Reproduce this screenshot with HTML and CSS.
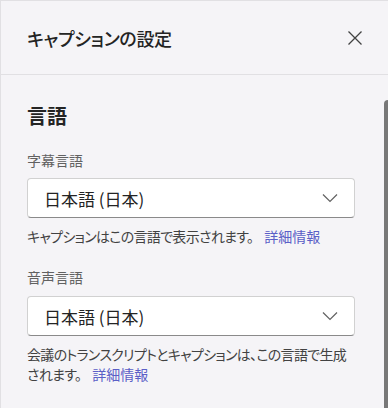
FILE: index.html
```html
<!DOCTYPE html>
<html lang="ja">
<head>
  <meta charset="UTF-8" />
  <meta name="viewport" content="width=device-width, initial-scale=1.0" />
  <title>キャプションの設定</title>
  <link rel="stylesheet" href="styles.css">
</head>
<body>

  <div class="panel">
    <!-- HEADER -->
    <header class="panel-header">
      <h1>キャプションの設定</h1>
      <button class="close-btn" aria-label="閉じる">
        <svg width="16" height="16" viewBox="0 0 16 16">
          <path d="M1.5 1.5 L14.5 14.5 M14.5 1.5 L1.5 14.5" stroke="#424242" stroke-width="1.3" fill="none" />
        </svg>
      </button>
    </header>

    <!-- CONTENT -->
    <main class="panel-body">
      <h2>言語</h2>

      <div class="field">
        <label>字幕言語</label>
        <div class="select">
          <span>日本語 (日本)</span>
          <svg width="16" height="10" viewBox="0 0 16 10">
            <path d="M1 1.5 L8 8.5 L15 1.5" stroke="#616161" stroke-width="1.2" fill="none" />
          </svg>
        </div>
        <p class="hint">キャプションはこの言語で表示されます。<a href="#">詳細情報</a></p>
      </div>

      <div class="field">
        <label>音声言語</label>
        <div class="select">
          <span>日本語 (日本)</span>
          <svg width="16" height="10" viewBox="0 0 16 10">
            <path d="M1 1.5 L8 8.5 L15 1.5" stroke="#616161" stroke-width="1.2" fill="none" />
          </svg>
        </div>
        <p class="hint">会議のトランスクリプトとキャプションは、この言語で生成されます。<a href="#">詳細情報</a></p>
      </div>
    </main>

    <!-- scrollbar thumb -->
    <div class="scroll-thumb"></div>
  </div>

</body>
</html>
```

FILE: styles.css
```css
/* VARIABLES */
:root {
  --color-bg: #f5f4f7;
  --color-line: #e1e0e3;
  --color-text: #242424;
  --color-muted: #616161;
  --color-hint: #424242;
  --color-link: #5b5fc7;
  --font-ui: 'Noto Sans CJK JP', 'Noto Sans', sans-serif;
}

/* RESET */
*, *::before, *::after { box-sizing: border-box; margin: 0; padding: 0; }
body {
  font-family: var(--font-ui);
  font-feature-settings: "palt";
  color: var(--color-text);
  background: var(--color-bg);
  overflow: hidden;
}
a { text-decoration: none; color: var(--color-link); }

/* PANEL */
.panel {
  position: relative;
  height: 408px;
  border-top: 1px solid var(--color-line);
  border-left: 1px solid var(--color-line);
  overflow: hidden;
}

/* HEADER */
.panel-header {
  height: 74px;
  display: flex;
  align-items: center;
  justify-content: space-between;
  padding: 0 25px 0 26px;
  border-bottom: 1px solid var(--color-line);
}
.panel-header h1 {
  font-size: 18px;
  font-weight: 500;
  line-height: 24px;
  letter-spacing: -0.3px;
}
.close-btn {
  background: none;
  border: 0;
  width: 16px;
  height: 16px;
  display: flex;
}

/* BODY */
.panel-body {
  padding: 27px 33px 0 26px;
}
.panel-body h2 {
  font-size: 20px;
  font-weight: 700;
  line-height: 28px;
  margin-bottom: 20px;
}
.field {
  display: flex;
  flex-direction: column;
  margin-bottom: 21px;
}
.field label {
  font-size: 14px;
  line-height: 20px;
  color: var(--color-muted);
  margin-bottom: 8px;
}
.field + .field label { margin-bottom: 9px; }
.select {
  height: 40px;
  background: #fff;
  border: 1px solid #d1d1d1;
  border-bottom-color: #8a8a8a;
  border-radius: 4px;
  display: flex;
  align-items: center;
  justify-content: space-between;
  padding: 0 16px;
  font-size: 17px;
  font-feature-settings: normal;
}
.hint {
  font-size: 14px;
  line-height: 20px;
  letter-spacing: -0.7px;
  color: var(--color-hint);
  margin-top: 8px;
}
.hint a {
  margin-left: 11px;
  letter-spacing: 0;
}

/* SCROLLBAR */
.scroll-thumb {
  position: absolute;
  right: 0;
  top: 99px;
  bottom: 0;
  width: 4px;
  background: #787878;
  border-top-left-radius: 4px;
}
```
